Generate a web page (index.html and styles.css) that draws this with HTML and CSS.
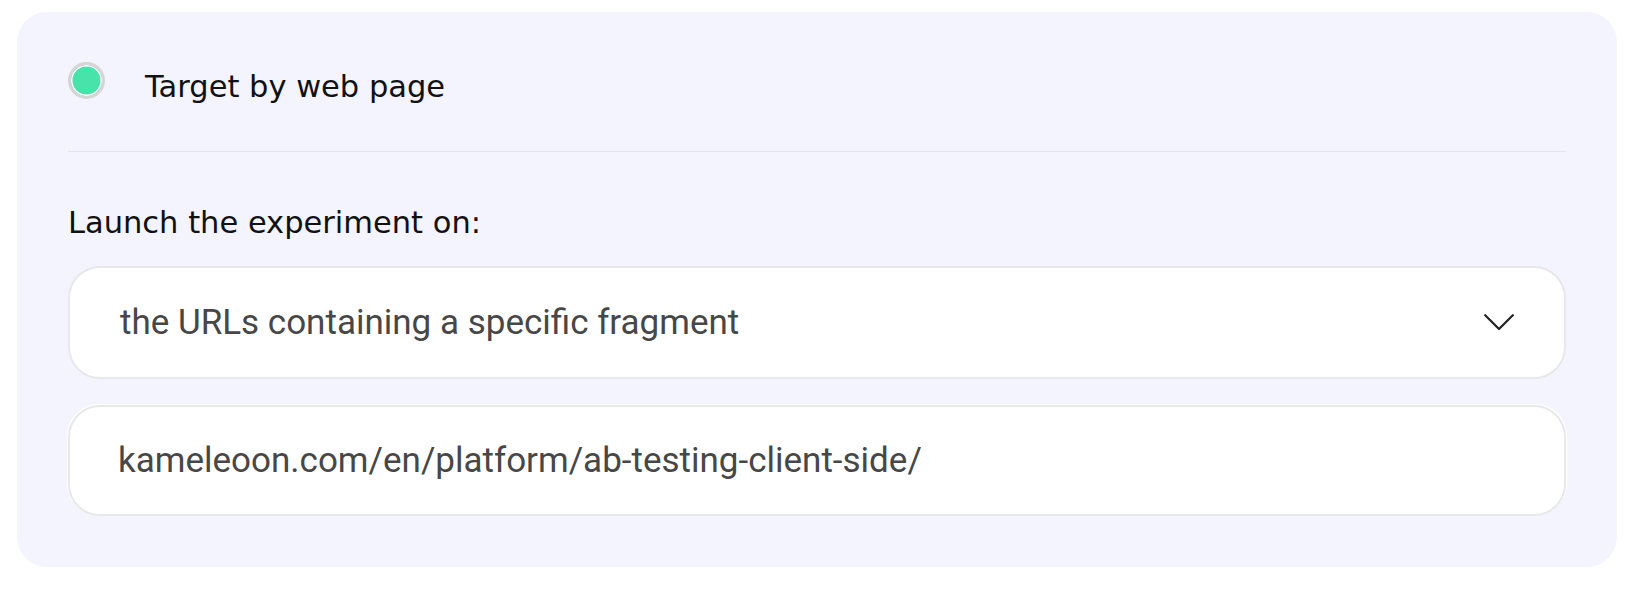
FILE: index.html
```html
<!DOCTYPE html>
<html lang="en">
<head>
<meta charset="utf-8">
<title>Target by web page</title>
<link rel="stylesheet" href="styles.css">
</head>
<body>
  <section class="card">
    <div class="option">
      <span class="radio" aria-checked="true" role="radio"></span>
      <span class="option-label">Target by web page</span>
    </div>
    <hr class="divider">
    <div class="field-label">Launch the experiment on:</div>
    <div class="select" role="combobox">
      <span class="select-value">the URLs containing a specific fragment</span>
      <svg class="chevron" width="30" height="17" viewBox="0 0 30 17" aria-hidden="true">
        <path d="M1.2 1.2 L15 15 L28.8 1.2" fill="none" stroke="#222" stroke-width="2.2" stroke-linecap="round" stroke-linejoin="round"/>
      </svg>
    </div>
    <input class="text-input" type="text" value="kameleoon.com/en/platform/ab-testing-client-side/">
  </section>
</body>
</html>
```

FILE: styles.css
```css
html, body {
  margin: 0;
  background: #ffffff;
}

body {
  padding: 12px 35px 0 17px;
}

.card {
  background: #f4f4fe;
  border-radius: 30px;
  padding: 50px 51px 51px 51px;
  display: flex;
  flex-direction: column;
}

.option {
  display: flex;
  align-items: flex-start;
  gap: 40px;
}

.radio {
  box-sizing: border-box;
  width: 37px;
  height: 37px;
  flex: none;
  border-radius: 50%;
  border: 3px solid #d5d5d6;
  background: #48e3aa;
  box-shadow: inset 0 0 0 1.5px #ffffff;
}

.option-label {
  font-family: "DejaVu Sans", sans-serif;
  font-size: 30.5px;
  line-height: 37px;
  margin-top: 6px;
  color: #111111;
}

.divider {
  border: none;
  border-top: 1px solid #e4e4ea;
  margin: 46px 0 0 0;
  height: 0;
}

.field-label {
  font-family: "DejaVu Sans", sans-serif;
  font-size: 30.5px;
  line-height: 35px;
  margin-top: 53px;
  color: #111111;
}

.select {
  box-sizing: border-box;
  margin-top: 26px;
  height: 113px;
  background: #ffffff;
  border: 2px solid #e8e8eb;
  border-radius: 32px;
  padding: 0 50px 0 50px;
  display: flex;
  align-items: center;
  justify-content: space-between;
}

.select-value {
  font-family: Roboto, "Noto Sans", sans-serif;
  font-size: 35px;
  color: #474747;
}

.chevron {
  flex: none;
}

.text-input {
  box-sizing: border-box;
  display: block;
  width: 100%;
  margin: 26px 0 0 0;
  height: 111px;
  background: #ffffff;
  border: 2px solid #e8e8eb;
  border-radius: 32px;
  box-shadow: 1px -1px 0 0 #ffffff, -1px -1px 0 0 #ffffff;
  padding: 0 48px;
  font-family: Roboto, "Noto Sans", sans-serif;
  font-size: 35px;
  color: #474747;
  outline: none;
}
```
